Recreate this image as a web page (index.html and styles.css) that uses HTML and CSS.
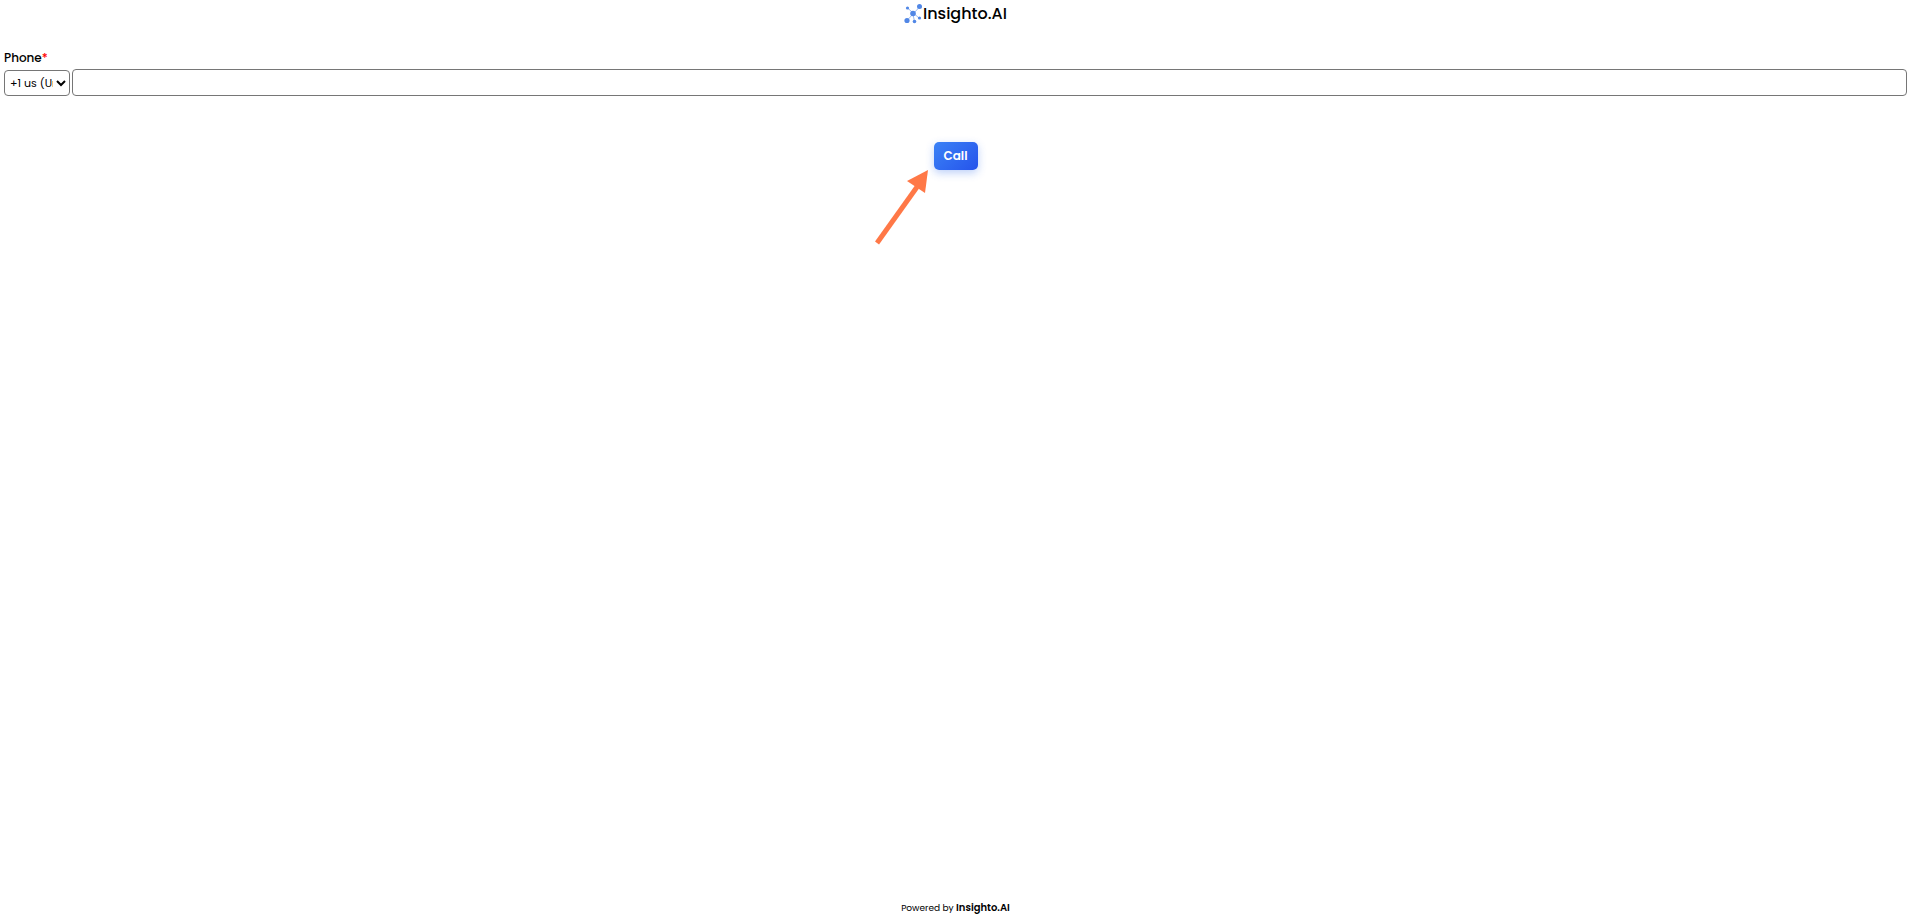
FILE: index.html
```html
<!DOCTYPE html>
<html lang="en">
<head>
    <meta charset="UTF-8">
    <title>Insighto.AI</title>
    <link rel="stylesheet" href="styles.css">
</head>
<body>
    <header class="header">
        <svg class="logo" viewBox="0 0 19 20" aria-hidden="true">
            <path d="M3.5 4 L15 14 M15.5 3 L3 16.5 M9 10 L10.5 18" stroke="#9dbcf2" stroke-width="1"/>
            <g fill="#5187e6">
                <circle cx="3.5" cy="4" r="1.6"/>
                <circle cx="15.5" cy="2.5" r="2.5"/>
                <circle cx="9" cy="9.5" r="2.8"/>
                <circle cx="3" cy="16.5" r="2.6"/>
                <circle cx="10.5" cy="17.5" r="1.8"/>
                <circle cx="15.5" cy="14" r="1.6"/>
            </g>
        </svg>
        <span class="brand">Insighto.AI</span>
    </header>

    <form class="call-form">
        <label class="phone-label" for="phone">Phone<span class="required">*</span></label>
        <div class="phone-row">
            <select class="country" aria-label="Country code">
                <option>+1 us (United States)</option>
                <option>+44 gb (United Kingdom)</option>
                <option>+91 in (India)</option>
            </select>
            <input class="phone" id="phone" type="tel">
        </div>
        <div class="actions">
            <button class="call-button" type="button">Call</button>
            <!-- Arrow pointing at the call button -->
            <svg class="arrow" viewBox="0 0 54 76" aria-hidden="true">
                <path d="M2 74 L42 18" stroke="#ff7847" stroke-width="5"/>
                <path d="M53 1 L32 12 L50 24 Z" fill="#ff7847"/>
            </svg>
        </div>
    </form>

    <footer class="footer">Powered by <a class="footer-brand" href="#">Insighto.AI</a></footer>
</body>
</html>
```

FILE: styles.css
```css
* {
    box-sizing: border-box;
}

body {
    display: flex;
    flex-direction: column;
    min-height: 100vh;
    margin: 0;
    padding: 4px 8px 0 4px;
    background-color: #fff;
    color: #000;
    font-family: Poppins, Inter, sans-serif;
}

/* Logo and name */
.header {
    display: flex;
    align-items: center;
    justify-content: center;
    height: 20px;
}

.logo {
    width: 19px;
    height: 20px;
}

.brand {
    font-size: 16px;
    font-weight: 500;
    line-height: 20px;
}

/* Phone form */
.call-form {
    flex: 1;
    margin-top: 24px;
}

.phone-label {
    display: block;
    font-size: 12px;
    font-weight: 500;
    line-height: 20px;
}

.required {
    color: #f00;
}

.phone-row {
    display: flex;
    align-items: center;
    gap: 2px;
    margin-top: 1px;
}

.country {
    width: 66px;
    height: 26px;
    padding: 0 0 0 1px;
    border: 1px solid #767676;
    border-radius: 4px;
    background-color: #fff;
    color: #000;
    font-family: inherit;
    font-size: 11px;
}

.phone {
    flex: 1;
    height: 27px;
    padding: 4px 8px;
    border: 1px solid #767676;
    border-radius: 4px;
    font-family: inherit;
    font-size: 12px;
}

/* Call button */
.actions {
    position: relative;
    display: flex;
    justify-content: center;
    margin-top: 46px;
}

.call-button {
    width: 44px;
    height: 28px;
    padding: 0;
    border: none;
    border-radius: 5px;
    background: linear-gradient(135deg, #3b82f6, #2553eb);
    box-shadow: 0 3px 8px rgba(37, 99, 235, 0.3);
    color: #fff;
    font-family: inherit;
    font-size: 12px;
    font-weight: 600;
    cursor: pointer;
}

.arrow {
    position: absolute;
    top: 27px;
    right: calc(50% + 27px);
    width: 54px;
    height: 76px;
}

/* Footer */
.footer {
    font-size: 9px;
    line-height: 16px;
    text-align: center;
}

.footer-brand {
    color: #000;
    font-size: 10px;
    font-weight: 600;
    text-decoration: none;
}
```
